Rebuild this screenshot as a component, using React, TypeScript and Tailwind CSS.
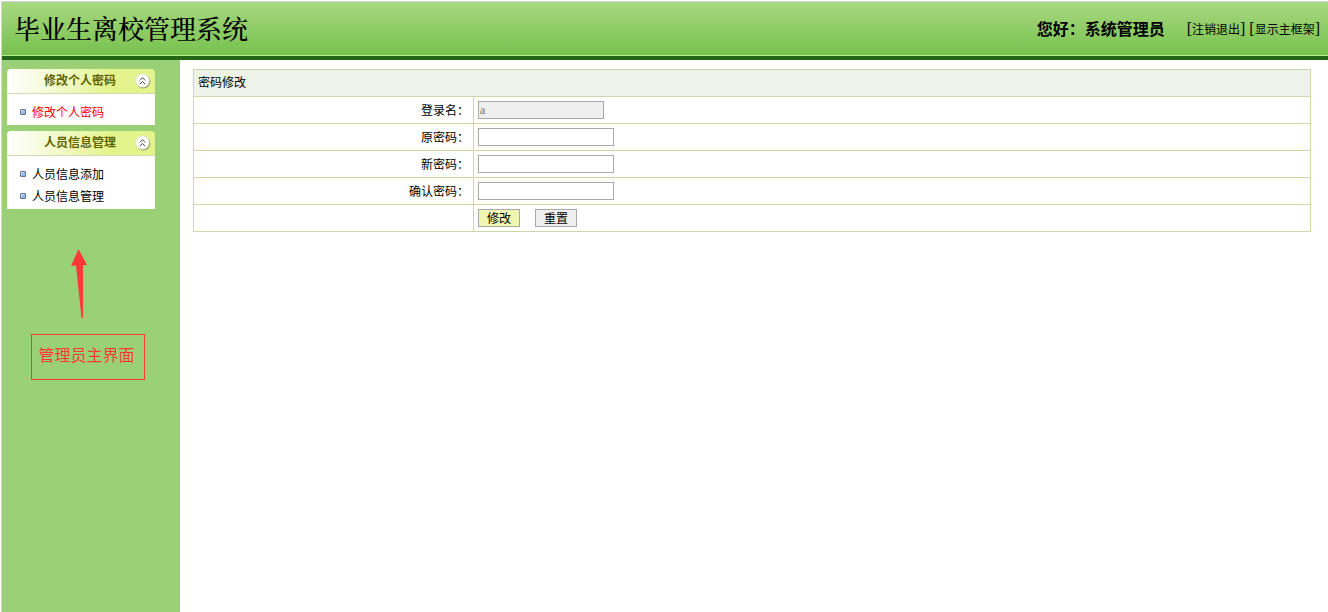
import clsx from "clsx";
import { ReactNode } from "react";

const menus = [
  {
    title: "修改个人密码",
    items: [{ label: "修改个人密码", active: true }],
  },
  {
    title: "人员信息管理",
    items: [
      { label: "人员信息添加", active: false },
      { label: "人员信息管理", active: false },
    ],
  },
];

const passwordFields = [
  { id: "old-password", label: "原密码：" },
  { id: "new-password", label: "新密码：" },
  { id: "confirm-password", label: "确认密码：" },
];

const CollapseIcon = () => (
  <svg width="16" height="16" viewBox="0 0 16 16" fill="none">
    <circle cx="8.5" cy="8.6" r="7" fill="#a3ab78" />
    <circle cx="7.5" cy="7.5" r="7" fill="#dfe2cc" />
    <circle cx="7.5" cy="7.5" r="6.3" fill="#fff" />
    <path d="M4.8 7.4 7.5 4.7l2.7 2.7M4.8 11.2l2.7-2.7 2.7 2.7" stroke="#333" strokeWidth=".9" />
  </svg>
);

const BulletIcon = () => (
  <svg width="6" height="6" viewBox="0 0 6 6">
    <rect x=".5" y=".5" width="5" height="5" rx=".5" fill="#8fb8ee" stroke="#66718c" />
    <path d="M1 1h3v1H2v2H1z" fill="#c9defa" />
  </svg>
);

const Header = () => (
  <header className="flex h-[59px] items-center justify-between border-t border-b-4 border-t-[#d4d4d4] border-b-[#236614] bg-linear-to-b from-[#a8d880] to-[#76c14c] pr-2 pl-3 shadow-[inset_0_-1px_0_#b9ee90]">
    <h1 className="pt-[3px] font-['Liberation_Serif','Noto_Serif_CJK_SC','Noto_Sans_CJK_SC',serif] text-[26px] leading-8 font-medium">
      毕业生离校管理系统
    </h1>
    <div className="flex items-center gap-[22px]">
      <strong className="pb-[3px] text-base leading-6">您好：系统管理员</strong>
      <nav className="font-['Liberation_Serif','Noto_Sans_CJK_SC',serif] text-base leading-6">
        [
        <a href="#logout" className="text-xs">
          注销退出
        </a>
        ] [
        <a href="#frame" className="text-xs">
          显示主框架
        </a>
        ]
      </nav>
    </div>
  </header>
);

const Sidebar = () => (
  <aside className="w-[178px] shrink-0 bg-[#9ad176] pt-[9px] pl-[5px]">
    <div className="flex w-[148px] flex-col gap-[6px]">
      {menus.map((menu) => (
        <section key={menu.title}>
          <button
            type="button"
            className="flex h-[25px] w-full items-center rounded-t border-b border-[#d3d9b4] bg-linear-to-r from-white to-[#e4f48c] to-70% pr-1"
          >
            <span className="flex-1 pb-[2px] pl-[18px] text-center text-xs font-bold text-[#5f6400]">
              {menu.title}
            </span>
            <CollapseIcon />
          </button>
          <ul className="bg-white pt-[7px] pb-[2px]">
            {menu.items.map((item) => (
              <li key={item.label} className="flex h-[22px] items-center gap-[6px] pl-[13px]">
                <BulletIcon />
                <a href="#menu" className={clsx(item.active && "text-[#ff0000]")}>
                  {item.label}
                </a>
              </li>
            ))}
          </ul>
        </section>
      ))}
    </div>

    <div className="flex w-[172px] flex-col items-center text-[#ff3838]">
      <svg width="16" height="70" viewBox="0 0 16 70" fill="currentColor" className="mt-10 mr-7">
        <path d="M7.5 0 16 16l-4 .3V69h-1.5L5 16.6 0 17z" />
      </svg>
      <p className="mt-[15px] mr-[11px] flex h-[46px] w-[114px] items-center justify-center border border-current pr-[2px] pb-[6px] text-base">
        管理员主界面
      </p>
    </div>
  </aside>
);

const FormRow = ({ label, children }: { label?: ReactNode; children: ReactNode }) => (
  <tr className="h-[27px]">
    <td className="w-[280px] border border-[#cdd7a8] pr-1 text-right">{label}</td>
    <td className="border border-[#cdd7a8] pl-1">
      <div className="flex items-center gap-[15px]">{children}</div>
    </td>
  </tr>
);

const PasswordForm = () => (
  <form onSubmit={(e) => e.preventDefault()}>
    <table className="w-full border-collapse">
      <thead>
        <tr className="h-[27px] bg-[#edf3e8]">
          <th colSpan={2} className="border border-[#cdd7a8] pb-[2px] pl-1 text-left font-normal">
            密码修改
          </th>
        </tr>
      </thead>
      <tbody>
        <FormRow label={<label htmlFor="username">登录名：</label>}>
          <input
            id="username"
            defaultValue="a"
            disabled
            className="h-[18px] w-[126px] border border-[#a9a9a9] bg-[#efefef] px-px font-['Liberation_Serif',serif] text-[#707070]"
          />
        </FormRow>
        {passwordFields.map((field) => (
          <FormRow key={field.id} label={<label htmlFor={field.id}>{field.label}</label>}>
            <input
              id={field.id}
              type="password"
              className="h-[18px] w-[136px] border border-[#a9a9a9] bg-white px-px"
            />
          </FormRow>
        ))}
        <FormRow>
          <button
            type="submit"
            className="h-[18px] w-[42px] border border-[#a9a9a9] bg-[#eff6b1] leading-4"
          >
            修改
          </button>
          <button
            type="reset"
            className="h-[18px] w-[42px] border border-[#a9a9a9] bg-[#efefef] leading-4"
          >
            重置
          </button>
        </FormRow>
      </tbody>
    </table>
  </form>
);

export default function App() {
  return (
    <div className="min-h-screen bg-white pt-px pl-px font-['Noto_Sans_CJK_SC',sans-serif] text-xs text-black">
      <div className="flex min-h-[calc(100vh-1px)] flex-col border-l border-[#d4d4d4]">
        <Header />
        <div className="flex flex-1">
          <Sidebar />
          <main className="min-w-0 flex-1 pt-[9px] pr-[17px] pl-[13px]">
            <PasswordForm />
          </main>
        </div>
      </div>
    </div>
  );
}
